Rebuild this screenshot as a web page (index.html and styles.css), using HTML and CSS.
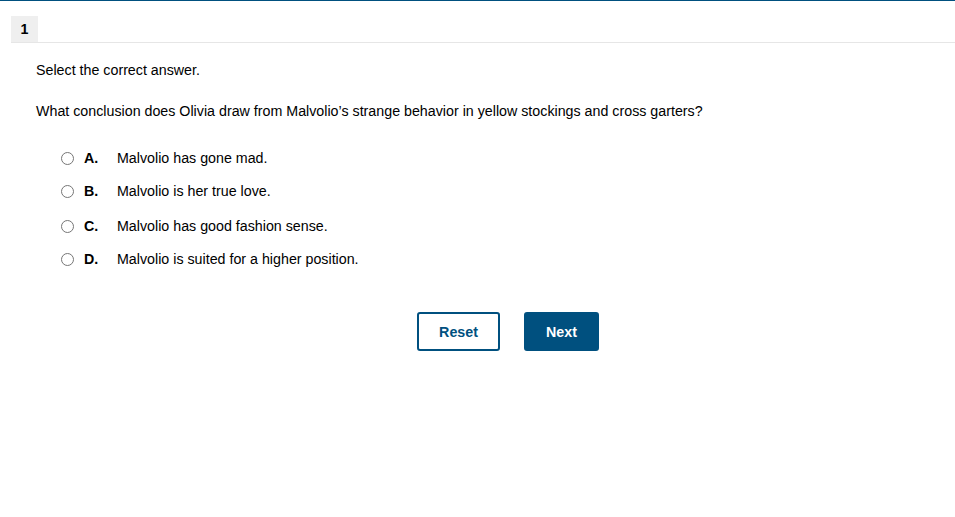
FILE: index.html
```html
<!DOCTYPE html>
<html lang="en">
<head>
    <meta charset="UTF-8">
    <title>Question 1</title>
    <link rel="stylesheet" href="styles.css">
</head>
<body>
<div class="topline"></div>
<div class="tabs">
    <div class="tab">1</div>
</div>
<div class="content">
    <p class="prompt">Select the correct answer.</p>
    <p class="question">What conclusion does Olivia draw from Malvolio’s strange behavior in yellow stockings and cross garters?</p>
    <ul class="choices">
        <li><span class="radio"></span><b>A.</b><span>Malvolio has gone mad.</span></li>
        <li><span class="radio"></span><b>B.</b><span>Malvolio is her true love.</span></li>
        <li><span class="radio"></span><b>C.</b><span>Malvolio has good fashion sense.</span></li>
        <li><span class="radio"></span><b>D.</b><span>Malvolio is suited for a higher position.</span></li>
    </ul>
    <div class="buttons">
        <button class="btn reset">Reset</button>
        <button class="btn next">Next</button>
    </div>
</div>
</body>
</html>
```

FILE: styles.css
```css
body,div,ul,li,p{margin:0;padding:0;}
ul{list-style-type:none;}
body{background:#fff;color:#000;font:14.25px/16px "Liberation Sans",Arial,sans-serif;}
.topline{height:1px;background:#00507f;}
.tabs{margin:15px 0 0 11px;border-bottom:1px solid #e6e6e6;display:flex;}
.tab{width:27px;height:26px;line-height:26px;text-align:center;background:#efefef;font-weight:700;}
.content{padding:19px 0 0 36px;}
.prompt{margin-bottom:25px;}
.question{margin-bottom:31px;}
.choices{padding-left:25px;}
.choices li{display:flex;align-items:center;height:16px;margin-bottom:17px;}
.choices li:nth-child(2){margin-bottom:19px;}
.radio{width:11px;height:11px;border:1px solid #767676;border-radius:50%;margin-right:10px;}
.choices b{width:33px;}
.buttons{display:flex;justify-content:center;gap:24px;margin-top:45px;padding-left:25px;}
.btn{height:39px;border-radius:3px;font:700 14.25px "Liberation Sans",Arial,sans-serif;border:2px solid #00507f;}
.reset{width:83px;background:#fff;color:#00507f;}
.next{width:75px;background:#00507f;color:#fff;}
```
